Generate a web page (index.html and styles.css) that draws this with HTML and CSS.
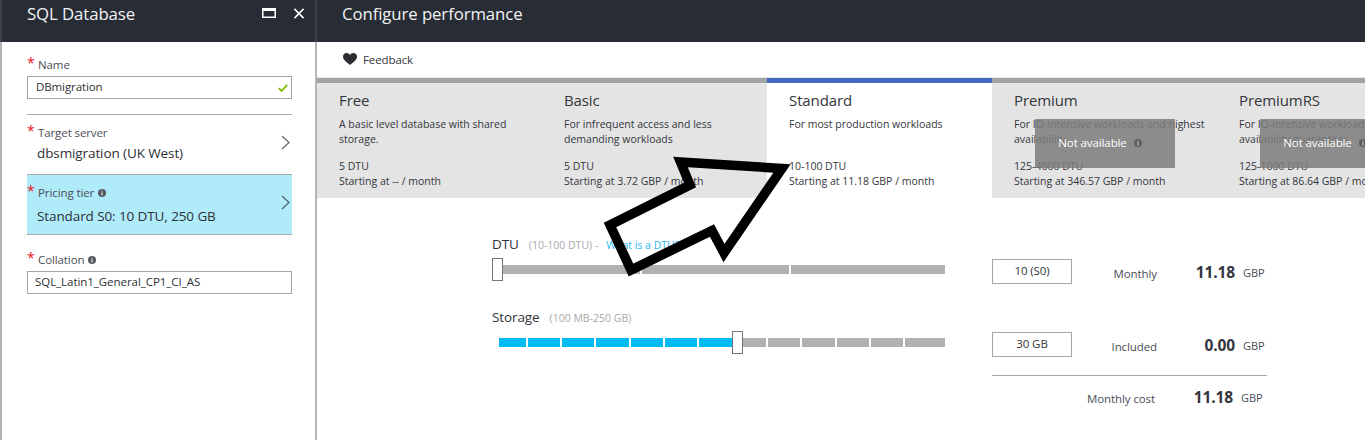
FILE: index.html
```html
<!DOCTYPE html>
<html lang="en">
<head>
<meta charset="utf-8">
<title>Configure performance</title>
<link rel="stylesheet" href="styles.css">
</head>
<body>
<div class="page">
  <section class="blade left">
    <header class="head left-head">
      <h1>SQL Database</h1>
      <div class="win-icons">
        <svg class="ic-max" viewBox="0 0 14 10"><path d="M0 0h14v10H0z M1.5 3v5.5h11V3z" fill="#fff" fill-rule="evenodd"/></svg>
        <svg class="ic-close" viewBox="0 0 12 12"><path d="M1 1l10 10M11 1L1 11" stroke="#fff" stroke-width="1.7" fill="none"/></svg>
      </div>
    </header>
    <div class="left-body">
      <div class="field name">
        <div class="lbl"><span class="star">*</span>Name</div>
        <div class="input">DBmigration
          <svg class="check" viewBox="0 0 10 8"><path d="M0.8 4.2L3.6 7L9.2 0.8" stroke="#7fba00" stroke-width="1.8" fill="none"/></svg>
        </div>
      </div>
      <div class="picker server">
        <div class="lbl"><span class="star">*</span>Target server</div>
        <div class="val">dbsmigration (UK West)</div>
        <svg class="chev" viewBox="0 0 9 15"><path d="M1 1l7 6.5L1 14" stroke="#5a5f68" stroke-width="1.1" fill="none"/></svg>
      </div>
      <div class="picker tier">
        <div class="lbl"><span class="star">*</span>Pricing tier<svg class="info" viewBox="0 0 8 8"><use href="#i"/></svg></div>
        <div class="val">Standard S0: 10 DTU, 250 GB</div>
        <svg class="chev" viewBox="0 0 9 15"><path d="M1 1l7 6.5L1 14" stroke="#4a5a68" stroke-width="1.1" fill="none"/></svg>
      </div>
      <div class="field coll">
        <div class="lbl"><span class="star">*</span>Collation<svg class="info" viewBox="0 0 8 8"><use href="#i"/></svg></div>
        <div class="input small">SQL_Latin1_General_CP1_CI_AS</div>
      </div>
    </div>
  </section>

  <section class="blade right">
    <header class="head right-head"><h1>Configure performance</h1></header>
    <div class="toolbar">
      <svg class="heart" viewBox="0 0 14 12"><path d="M7 12C3 9 0 6.800 0 3.600 0 1.500 1.600 0 3.500 0 5 0 6.300.8 7 2 7.700.8 9 0 10.500 0 12.400 0 14 1.500 14 3.600 14 6.800 11 9 7 12z" fill="#2b2d33"/></svg>
      <span>Feedback</span>
    </div>
    <div class="tabs">
      <article class="tab">
        <h2>Free</h2>
        <p class="desc">A basic level database with shared storage.</p>
        <p>5 DTU</p><p>Starting at -- / month</p>
      </article>
      <article class="tab">
        <h2>Basic</h2>
        <p class="desc">For infrequent access and less demanding workloads</p>
        <p>5 DTU</p><p>Starting at 3.72 GBP / month</p>
      </article>
      <article class="tab on">
        <h2>Standard</h2>
        <p class="desc">For most production workloads</p>
        <p>10-100 DTU</p><p>Starting at 11.18 GBP / month</p>
      </article>
      <article class="tab">
        <h2>Premium</h2>
        <p class="desc">For IO-intensive workloads and highest availability</p>
        <p>125-4000 DTU</p><p>Starting at 346.57 GBP / month</p>
        <div class="na">Not available<svg class="info" viewBox="0 0 8 8"><use href="#i2"/></svg></div>
      </article>
      <article class="tab">
        <h2>PremiumRS</h2>
        <p class="desc">For IO-intensive workloads with limited availability guarantees</p>
        <p>125-1000 DTU</p><p>Starting at 86.64 GBP / month</p>
        <div class="na">Not available<svg class="info" viewBox="0 0 8 8"><use href="#i2"/></svg></div>
      </article>
    </div>
    <div class="config">
      <div class="row">
        <div class="slider">
          <div class="s-label">DTU<small>(10-100 DTU) -</small><a>What is a DTU?</a></div>
          <div class="track dtu">
            <i class="seg" style="width:141px"></i><i class="seg" style="width:147px"></i><i class="seg" style="width:154px"></i>
            <b class="thumb" style="left:0"></b>
          </div>
        </div>
        <div class="box">10 (S0)</div>
        <div class="cap">Monthly</div>
        <div class="amt">11.18</div>
        <div class="cur">GBP</div>
      </div>
      <div class="row second">
        <div class="slider">
          <div class="s-label">Storage<small>(100 MB-250 GB)</small></div>
          <div class="track stor">
            <i class="seg blue" style="width:27px"></i><i class="seg blue" style="width:32px"></i><i class="seg blue" style="width:32px"></i><i class="seg blue" style="width:33px"></i><i class="seg blue" style="width:32px"></i><i class="seg blue" style="width:32px"></i><i class="seg blue" style="width:33px"></i><i class="seg" style="width:32px"></i><i class="seg" style="width:32px"></i><i class="seg" style="width:33px"></i><i class="seg" style="width:32px"></i><i class="seg" style="width:32px"></i><i class="seg" style="width:40px"></i>
            <b class="thumb" style="left:240px"></b>
          </div>
        </div>
        <div class="box">30 GB</div>
        <div class="cap">Included</div>
        <div class="amt">0.00</div>
        <div class="cur">GBP</div>
      </div>
      <div class="total">
        <div class="cap">Monthly cost</div>
        <div class="amt">11.18</div>
        <div class="cur">GBP</div>
      </div>
    </div>
  </section>

  <svg class="arrow" viewBox="0 0 1365 440">
    <path d="M680.500 162L782 168.500L724 253L712 230.500L631 270L610 225L690 185Z" fill="none" stroke="#000" stroke-width="9.500" stroke-miterlimit="10"/>
  </svg>
  <svg class="defs" width="0" height="0">
    <symbol id="i" viewBox="0 0 8 8"><circle cx="4" cy="4" r="4" fill="#55585f"/><path d="M3.500 1.400h1v1h-1zM3.500 3.200h1v3.400h-1z" fill="#fff"/></symbol>
    <symbol id="i2" viewBox="0 0 8 8"><circle cx="4" cy="4" r="4" fill="#5f5f5f"/><path d="M3.500 1.400h1v1h-1zM3.500 3.200h1v3.400h-1z" fill="#ddd"/></symbol>
  </svg>
</div>
</body>
</html>
```

FILE: styles.css
```css
html, body { margin: 0; padding: 0; height: 440px; overflow: hidden; background: #fff; }
body { font-family: "Open Sans", "Noto Sans", "Liberation Sans", sans-serif; color: #33363c; }
.page { position: relative; display: flex; width: 1365px; height: 440px; overflow: hidden; }
.blade { display: flex; flex-direction: column; height: 440px; }
.left { flex: 0 0 317px; }
.right { flex: 1 1 auto; min-width: 0; overflow: hidden; }
.head { flex: 0 0 42px; background: #282c35; box-sizing: border-box; display: flex; justify-content: space-between; }
.head h1 { margin: 0; font-size: 16.800px; font-weight: 400; line-height: 28px; color: #f2f3f4; letter-spacing: -0.1px; }
.left-head { padding: 0 10px 0 25px; border: solid #3b3f48; border-width: 0 2px; }
.right-head { padding-left: 25px; }
.win-icons { display: flex; align-items: flex-start; gap: 17px; padding-top: 8px; }
.ic-max { width: 14px; height: 10px; }
.ic-close { width: 12px; height: 11px; }

.left-body { flex: 1; box-sizing: border-box; border: solid #b4b4b4; border-width: 0 2px; padding: 0 23px 0 25px; }
.lbl { position: relative; font-size: 11.500px; line-height: 16px; color: #4a4d55; padding-left: 11px; letter-spacing: -0.1px; display: flex; align-items: center; }
.star { position: absolute; left: 0; top: -2px; color: #e81123; font-size: 14px; }
.info { width: 8px; height: 8px; margin-left: 4px; flex: none; }
.field.name { padding: 14px 0 15px; border-bottom: 1px solid #aaa; }
.name .lbl { top: 1px; }
.input { position: relative; margin-top: 4px; height: 23px; box-sizing: border-box; border: 1px solid #a6a6a6; padding-left: 8px; font-size: 11.500px; line-height: 20px; letter-spacing: -0.1px; color: #2e3036; }
.input.small { padding-left: 7px; letter-spacing: -0.05px; }
.check { position: absolute; right: 3px; top: 7px; width: 10px; height: 8px; }
.picker { position: relative; height: 60px; box-sizing: border-box; padding-top: 10px; border-bottom: 1px solid #aaa; }
.val { padding-left: 10px; margin-top: 2px; font-size: 13.500px; line-height: 20px; letter-spacing: -0.1px; color: #2e3036; }
.tier { background: #b0ebfa; }
.tier .val { margin-top: 5px; }
.chev { position: absolute; right: 2px; top: 20px; width: 9px; height: 15px; }
.field.coll { padding-top: 17px; }
.coll .input { margin-top: 3px; }

.toolbar { flex: 0 0 36px; box-sizing: border-box; padding: 0 0 2px 26px; display: flex; align-items: center; gap: 6px; font-size: 11.500px; letter-spacing: -0.1px; color: #33363c; }
.heart { width: 14px; height: 12px; }
.tabs { display: grid; grid-template-columns: repeat(5, 225px); width: 1125px; flex: none; }
.tab { position: relative; height: 120px; box-sizing: border-box; padding: 7px 8px 0 22px; background: #e4e4e4; border-top: 5px solid #a0a4a6; box-shadow: 0 -1px 0 #e6e6e6; }
.tab.on { background: #fff; border-top-color: #4668c5; }
.tab h2 { margin: 0 0 7px; font-size: 15px; font-weight: 400; line-height: 20px; color: #33363c; letter-spacing: -0.1px; }
.tab p { margin: 0; font-size: 10.500px; line-height: 15px; color: #33363c; }
.tab .desc { height: 42px; }
.na { position: absolute; left: 43px; top: 36px; width: 140px; height: 49px; box-sizing: border-box; padding: 0 10px 2px 0; display: flex; align-items: center; justify-content: center; background: rgba(124, 124, 124, 0.85); color: #fff; font-size: 11.500px; letter-spacing: -0.1px; }
.na .info { margin-left: 7px; }

.config { flex: 1; padding: 36px 0 0 175px; }
.row { display: flex; align-items: flex-start; height: 73px; }
.row.second { height: 68px; }
.slider { flex: 0 0 453px; }
.s-label { font-size: 13.500px; line-height: 20px; height: 24px; color: #33363c; letter-spacing: -0.1px; display: flex; align-items: baseline; }
.s-label small { margin-left: 10px; font-size: 10.500px; color: #a8a8a8; letter-spacing: 0; }
.s-label a { margin-left: 8px; font-size: 10.500px; color: #1fb6f0; letter-spacing: 0; }
.track { position: relative; display: flex; gap: 2px; height: 23px; align-items: center; padding-left: 7px; }
.seg { display: block; flex: none; height: 9px; background: #b1b1b1; }
.seg.blue { background: #00bcf2; }
.thumb { position: absolute; top: 0; width: 11px; height: 23px; box-sizing: border-box; background: #fff; border: 1px solid #77727a; }
.box { flex: 0 0 80px; box-sizing: border-box; margin: 25px 0 0 47px; height: 25px; border: 1px solid #a6a6a6; text-align: center; font-size: 11.500px; line-height: 22px; letter-spacing: -0.1px; color: #33363c; }
.cap { flex: 0 0 85px; margin-top: 30px; text-align: right; font-size: 11.500px; line-height: 20px; color: #4a4d55; letter-spacing: -0.1px; }
.amt { flex: 0 0 78px; margin-top: 26px; text-align: right; font-size: 15.500px; font-weight: 700; line-height: 24px; color: #33363c; letter-spacing: -0.1px; }
.cur { margin: 29px 0 0 8px; font-size: 11px; line-height: 20px; color: #4a4d55; letter-spacing: -0.1px; }
.total { margin-left: 500px; width: 275px; border-top: 1px solid #a6a6a6; display: flex; }
.total .cap { flex: 0 0 163px; margin-top: 13px; }
.total .amt { margin-top: 9px; }
.total .cur { margin-top: 12px; }
.arrow { position: absolute; left: 0; top: 0; width: 1365px; height: 440px; pointer-events: none; }
.defs { position: absolute; }
```
